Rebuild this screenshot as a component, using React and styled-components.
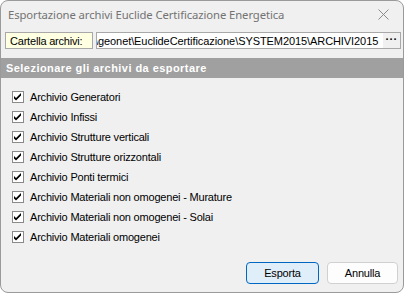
import React from "react";
import styled, { createGlobalStyle } from "styled-components";

const Global = createGlobalStyle`
  html, body { margin: 0; padding: 0; background: #ffffff; }
  #root { width: 405px; height: 294px; }
`;

const Window = styled.div`
  box-sizing: border-box;
  width: 404px;
  height: 293px;
  background: #f0f0f0;
  border: 1px solid #9a9a9a;
  border-radius: 8px;
  overflow: hidden;
  display: flex;
  flex-direction: column;
  font-family: "Liberation Sans", Arial, sans-serif;
  font-size: 11px;
  letter-spacing: -0.2px;
  color: #000;
`;

const TitleBar = styled.div`
  height: 27px;
  display: flex;
  align-items: center;
  justify-content: space-between;
  padding: 0 14px 0 7px;
  flex-shrink: 0;
`;

const Title = styled.span`
  font-family: "Noto Sans", "Open Sans", sans-serif;
  font-size: 11.3px;
  letter-spacing: -0.1px;
  color: #737373;
`;

const CloseIcon = styled.svg`
  width: 11px;
  height: 11px;
  display: block;
`;

const PathRow = styled.div`
  display: flex;
  align-items: stretch;
  gap: 3px;
  padding: 4px 2px 0 4px;
  height: 17px;
`;

const Label = styled.div`
  box-sizing: border-box;
  width: 88px;
  border: 1px solid #a8a8a8;
  background: #ffffe1;
  display: flex;
  align-items: center;
  padding-left: 4px;
  white-space: nowrap;
`;

const PathBox = styled.div`
  box-sizing: border-box;
  flex: 1;
  border: 1px solid #a8a8a8;
  background: #ffffff;
  display: flex;
  align-items: stretch;
  min-width: 0;
`;

const PathText = styled.div`
  flex: 1;
  min-width: 0;
  overflow: hidden;
  display: flex;
  align-items: center;
  white-space: nowrap;
  letter-spacing: -0.08px;
  text-indent: -2px;
`;

const DotsButton = styled.div`
  width: 17px;
  background: #f0f0f0;
  display: flex;
  align-items: center;
  justify-content: center;
  font-weight: bold;
  font-size: 11px;
  letter-spacing: 0.3px;
  line-height: 1;
  padding-bottom: 3px;
  box-sizing: border-box;
`;

const SectionHeader = styled.div`
  margin-top: 9px;
  height: 20px;
  background: #a0a0a0;
  color: #ffffff;
  font-weight: bold;
  font-size: 11px;
  letter-spacing: 0.45px;
  display: flex;
  align-items: center;
  padding-left: 5px;
`;

const List = styled.div`
  display: flex;
  flex-direction: column;
  padding: 9px 0 0 11px;
`;

const Row = styled.label`
  height: 20px;
  display: flex;
  align-items: center;
  gap: 6px;
`;

const Box = styled.span`
  box-sizing: border-box;
  width: 12px;
  height: 12px;
  border: 1px solid #8a8a8a;
  background: #ffffff;
  display: flex;
  align-items: center;
  justify-content: center;
`;

const Footer = styled.div`
  margin-top: auto;
  display: flex;
  justify-content: flex-end;
  gap: 8px;
  padding: 0 5px 8px 0;
`;

const Button = styled.button`
  box-sizing: border-box;
  width: ${(p) => p.$w}px;
  height: 22px;
  border-radius: 4px;
  border: 1px solid ${(p) => (p.$primary ? "#0067c0" : "#d0d0d0")};
  background: ${(p) => (p.$primary ? "#e0eef9" : "#fdfdfd")};
  font-family: "Liberation Sans", Arial, sans-serif;
  font-size: 11px;
  letter-spacing: -0.2px;
  color: #000;
  padding: 0;
`;

const items = [
  "Archivio Generatori",
  "Archivio Infissi",
  "Archivio Strutture verticali",
  "Archivio Strutture orizzontali",
  "Archivio Ponti termici",
  "Archivio Materiali non omogenei - Murature",
  "Archivio Materiali non omogenei - Solai",
  "Archivio Materiali omogenei",
];

function Check() {
  return (
    <svg width="8" height="8" viewBox="0 0 8 8">
      <polygon points="0,3 2,5 7,0 7,2.6 2,7.6 0,5.6" fill="#000" />
    </svg>
  );
}

export default function App() {
  return (
    <>
      <Global />
      <Window>
        <TitleBar>
          <Title>Esportazione archivi Euclide Certificazione Energetica</Title>
          <CloseIcon viewBox="0 0 11 11">
            <path d="M0.5 0.5 L10.5 10.5 M10.5 0.5 L0.5 10.5" stroke="#8a8a8a" strokeWidth="1" />
          </CloseIcon>
        </TitleBar>
        <PathRow>
          <Label>Cartella archivi:</Label>
          <PathBox>
            <PathText>\geonet\EuclideCertificazione\SYSTEM2015\ARCHIVI2015</PathText>
            <DotsButton>···</DotsButton>
          </PathBox>
        </PathRow>
        <SectionHeader>Selezionare gli archivi da esportare</SectionHeader>
        <List>
          {items.map((t) => (
            <Row key={t}>
              <Box>
                <Check />
              </Box>
              <span>{t}</span>
            </Row>
          ))}
        </List>
        <Footer>
          <Button $primary $w={73}>Esporta</Button>
          <Button $w={71}>Annulla</Button>
        </Footer>
      </Window>
    </>
  );
}
